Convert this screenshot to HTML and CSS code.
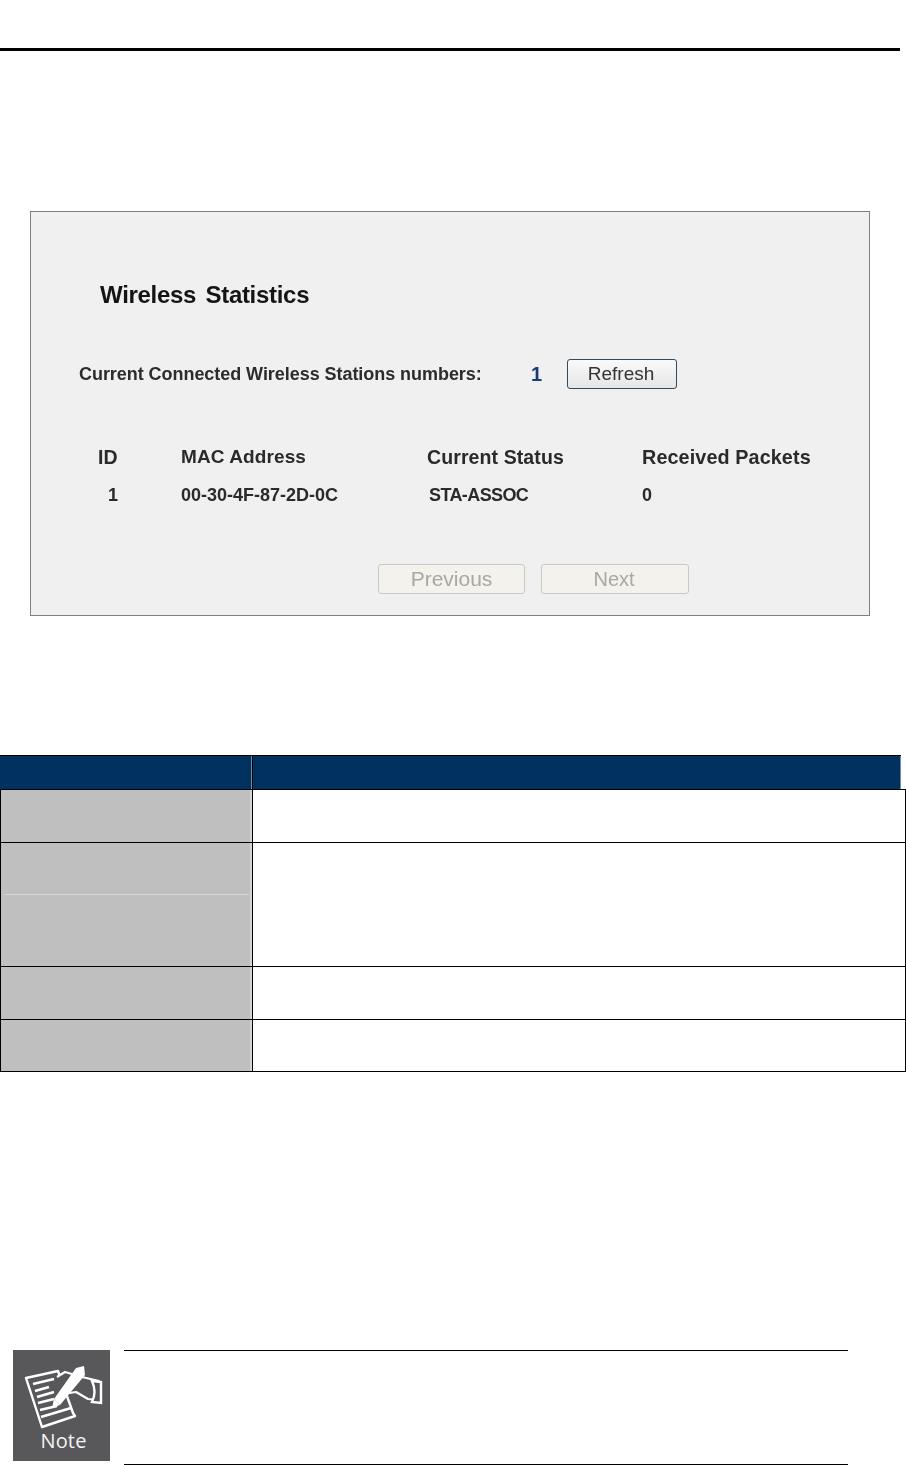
FILE: index.html
```html
<!DOCTYPE html>
<html lang="en">
  <head>
    <meta charset="UTF-8" />
    <title>Wireless Statistics</title>
    <link rel="stylesheet" href="styles.css">
  </head>
  <body>
    <div class="top-rule"></div>

    <!-- Router page capture -->
    <div class="panel">
      <h2 class="panel-title">Wireless Statistics</h2>
      <div class="count-row">
        <span class="count-label">Current Connected Wireless Stations numbers:</span>
        <span class="count-value">1</span>
        <span class="btn btn-refresh">Refresh</span>
      </div>
      <div class="stats-grid">
        <div class="stats-head">ID</div>
        <div class="stats-head stats-head-mac">MAC Address</div>
        <div class="stats-head">Current Status</div>
        <div class="stats-head stats-head-packets">Received Packets</div>
        <div class="stats-cell stats-id">1</div>
        <div class="stats-cell">00-30-4F-87-2D-0C</div>
        <div class="stats-cell stats-status">STA-ASSOC</div>
        <div class="stats-cell">0</div>
      </div>
      <div class="pager">
        <span class="btn btn-off btn-prev">Previous</span>
        <span class="btn btn-off btn-next">Next</span>
      </div>
    </div>

    <!-- Description table -->
    <div class="desc-head">
      <div class="desc-head-left"></div>
      <div class="desc-head-right"></div>
    </div>
    <table class="desc-table">
      <tr class="row-a">
        <td class="key"></td>
        <td class="val"></td>
      </tr>
      <tr class="row-b">
        <td class="key key-split"><div class="split-line"></div></td>
        <td class="val" rowspan="2"></td>
      </tr>
      <tr class="row-c">
        <td class="key"></td>
      </tr>
      <tr class="row-d">
        <td class="key"></td>
        <td class="val"></td>
      </tr>
      <tr class="row-e">
        <td class="key"></td>
        <td class="val"></td>
      </tr>
    </table>

    <!-- Note block -->
    <div class="note">
      <div class="note-icon">
        <svg class="note-art" width="97" height="80" viewBox="0 0 97 80">
          <!-- paper -->
          <path d="M13 28 L45 21 L49 32 L60 63 L62 66 L29 77 Z" fill="none" stroke="#fff" stroke-width="2.4" stroke-linejoin="round" />
          <g stroke="#fff" stroke-width="2.6" fill="none">
            <path d="M20 34 L41 29" />
            <path d="M22 41 L36 37" />
            <path d="M24 47 L41 42" />
            <path d="M25 53 L41 49" />
            <path d="M27 60 L44 56" />
            <path d="M28 67 L58 58" />
          </g>
          <!-- hand and pen -->
          <path d="M44 27 L52 22 L69 27 L86 31 L85 50 L75 49 L63 42 L50 44 L44 52" fill="#58585a" stroke="#fff" stroke-width="2.2" stroke-linejoin="round" />
          <path d="M41 49 L47 55 L72 25 L71 16 L63 18 Z" fill="#fff" />
          <path d="M39 58 L41 49 L47 55 Z" fill="#fff" />
          <path d="M79 31 L88 32 L88 53 L79 52 Q84 42 79 31 Z" fill="#58585a" stroke="#fff" stroke-width="2.4" />
        </svg>
        <span class="note-label">Note</span>
      </div>
      <div class="note-body"></div>
    </div>
  </body>
</html>
```

FILE: styles.css
```css
/* Global Styles */
html,
body {
  height: 100%;
}

body {
  margin: 0;
  background-color: #fff;
  font-family: "Liberation Sans", Arial, sans-serif;
  color: #222;
  overflow: hidden;
}

.top-rule {
  height: 3px;
  width: 900px;
  margin-top: 48px;
  background-color: #000;
}

/* Router page capture */
.panel {
  box-sizing: border-box;
  width: 840px;
  height: 405px;
  margin: 160px 0 0 30px;
  padding-top: 68px;
  border: 1px solid #808080;
  background-color: #f0f0f0;
}

.panel-title,
.count-row,
.stats-grid,
.pager {
  filter: blur(0.35px); /* soft like the scanned capture */
}

.panel-title {
  margin: 0 0 0 69px;
  font-size: 24px;
  line-height: 30px;
  font-weight: 700;
  letter-spacing: -0.3px;
  word-spacing: 3px;
  color: #141414;
}

.count-row {
  display: flex;
  align-items: center;
  height: 30px;
  margin: 49px 0 0 48px;
  font-size: 18px;
  font-weight: 700;
  color: #2c2c2c;
}

.count-label {
  width: 452px;
  letter-spacing: -0.05px;
  white-space: nowrap;
}

.count-value {
  width: 36px;
  font-size: 20px;
  color: #1d3a78;
}

.btn {
  box-sizing: border-box;
  display: flex;
  align-items: center;
  justify-content: center;
  height: 30px;
  font-weight: 400;
}

.btn-refresh {
  width: 110px;
  padding-right: 2px;
  font-size: 19px;
  color: #333;
  border: 1px solid #2f4a63;
  border-radius: 3px;
  background: linear-gradient(#fafafa, #e6e6e6);
}

.stats-grid {
  display: grid;
  grid-template-columns: 83px 246px 215px 1fr;
  grid-auto-rows: 38px;
  align-items: center;
  margin: 49px 0 0 67px;
  font-weight: 700;
  color: #2a2a2a;
}

.stats-head {
  font-size: 19.5px;
  letter-spacing: 0.1px;
}

.stats-head-mac {
  font-size: 19px;
}

.stats-head-packets {
  font-size: 19.8px;
}

.stats-cell {
  font-size: 18px;
}

.stats-id {
  padding-left: 10px;
}

.stats-status {
  padding-left: 2px;
  letter-spacing: -0.6px;
}

.pager {
  display: flex;
  gap: 16px;
  margin: 50px 0 0 347px;
}

.btn-off {
  font-size: 20px;
  color: #a8a8a4;
  border: 1px solid #c9c9c4;
  border-radius: 3px;
  background-color: #f3f2ec;
}

.btn-prev {
  width: 147px;
  font-size: 21px;
}

.btn-next {
  width: 148px;
  padding-right: 2px;
}

/* Description table */
.desc-head {
  display: flex;
  box-sizing: border-box;
  width: 901px;
  height: 34px;
  margin-top: 139px;
  border-top: 1px solid #000;
  background-color: #00315f;
}

.desc-head-left {
  box-sizing: border-box;
  width: 253px;
  border-right: 1px solid #000;
  box-shadow: inset -1px 0 0 #6f88a3;
}

.desc-head-right {
  flex: 1;
  box-shadow: inset -1px 0 0 #6f88a3;
}

.desc-table {
  width: 906px;
  table-layout: fixed;
  border-collapse: collapse;
}

.desc-table td {
  padding: 0;
  border: 1px solid #000;
}

.key {
  width: 251px;
  background-color: #bfbfbf;
  box-shadow: inset -2px 0 0 #d4d4d4;
}

.val {
  background-color: #fff;
}

.desc-table .key-split {
  border-bottom: none;
  padding: 0 3px;
  vertical-align: bottom;
}

.desc-table .row-c .key {
  border-top: none;
}

.split-line {
  height: 1px;
  background-color: #d6d6d6;
}

.row-a {
  height: 53px;
}

.row-b {
  height: 52px;
}

.row-c {
  height: 72px;
}

.row-d {
  height: 53px;
}

.row-e {
  height: 52px;
}

/* Note block */
.note {
  display: flex;
  margin: 278px 0 0 13px;
}

.note-icon {
  display: flex;
  flex-direction: column;
  align-items: center;
  width: 97px;
  height: 111px;
  background-color: #58585a;
}

.note-art {
  display: block;
  flex: none;
}

.note-label {
  padding: 1px 0 0 4px;
  font-family: "Open Sans", sans-serif;
  font-size: 20px;
  line-height: 20px;
  letter-spacing: 0.2px;
  color: #f4f4f4;
}

.note-body {
  box-sizing: border-box;
  width: 724px;
  height: 115px;
  margin-left: 14px;
  border-top: 1px solid #000;
  border-bottom: 1px solid #000;
}
```
